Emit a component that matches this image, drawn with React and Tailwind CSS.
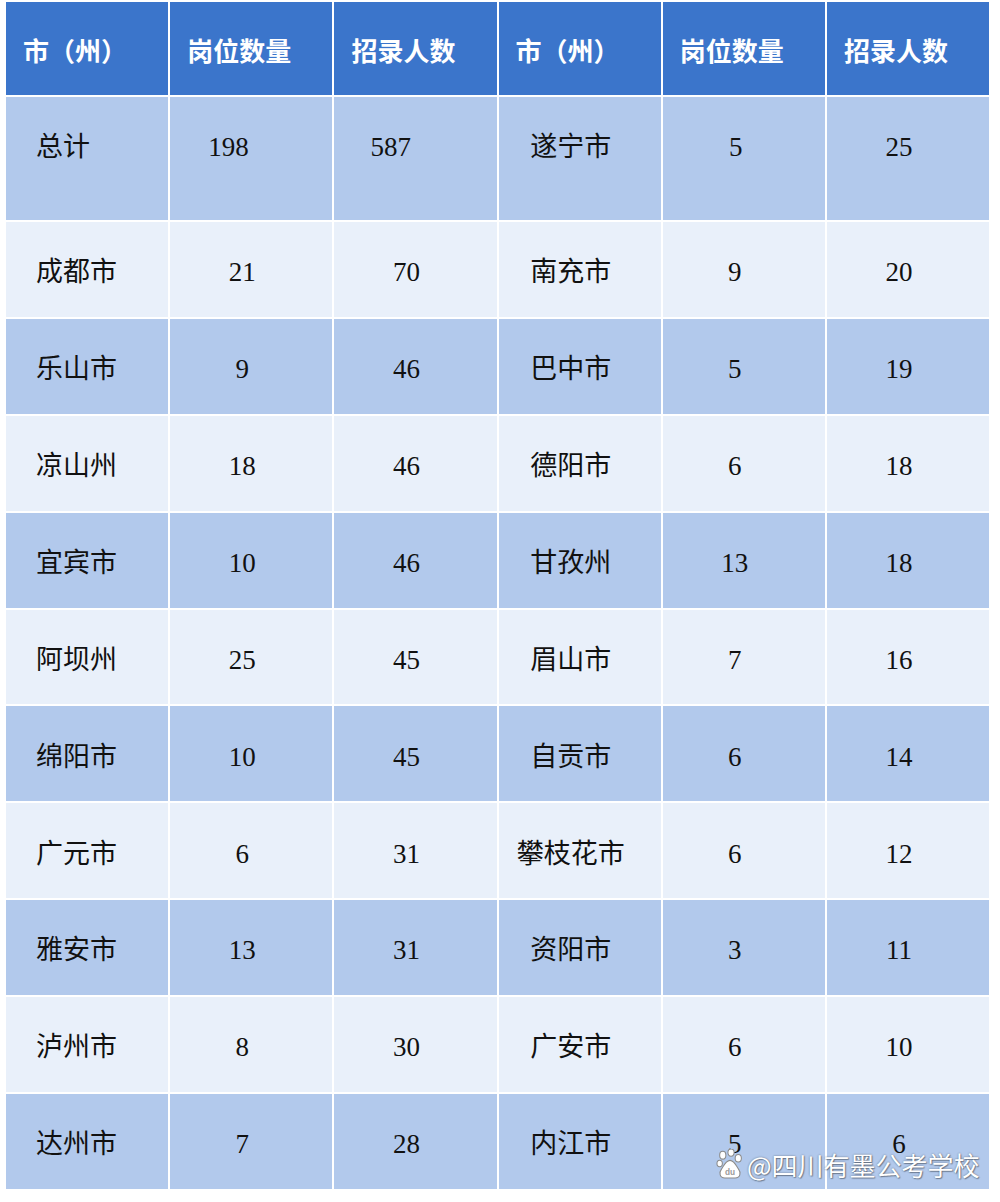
const header = ["市（州）", "岗位数量", "招录人数", "市（州）", "岗位数量", "招录人数"];

const rows = [
  ["成都市", "21", "70", "南充市", "9", "20"],
  ["乐山市", "9", "46", "巴中市", "5", "19"],
  ["凉山州", "18", "46", "德阳市", "6", "18"],
  ["宜宾市", "10", "46", "甘孜州", "13", "18"],
  ["阿坝州", "25", "45", "眉山市", "7", "16"],
  ["绵阳市", "10", "45", "自贡市", "6", "14"],
  ["广元市", "6", "31", "攀枝花市", "6", "12"],
  ["雅安市", "13", "31", "资阳市", "3", "11"],
  ["泸州市", "8", "30", "广安市", "6", "10"],
  ["达州市", "7", "28", "内江市", "5", "6"],
];

const bodyCls = "text-[27px] text-[#111] font-['Liberation_Serif','Noto_Sans_CJK_SC',serif]";
const topCell = "h-[123px] bg-[#b2c9ec] flex items-center pb-[22px] " + bodyCls;

function Paw() {
  return (
    <svg width="28" height="31" viewBox="0 0 26 30">
      <g fill="#fff" stroke="#8a8a8a" strokeWidth="1">
        <ellipse cx="6" cy="6" rx="3" ry="3.8" />
        <ellipse cx="14" cy="3.5" rx="3" ry="3.5" />
        <ellipse cx="21" cy="9" rx="3" ry="3.6" />
        <ellipse cx="3" cy="14" rx="2.6" ry="3.2" />
        <path d="M13 11 C9 11 7 16 5 19 C2 23 3 28 8 28 L18 28 C23 28 24 23 21 19 C19 16 17 11 13 11 Z" />
      </g>
      <text x="13" y="25" textAnchor="middle" fontSize="8" fontWeight="700" fill="#9a9a9a" fontFamily="Liberation Sans, sans-serif">du</text>
    </svg>
  );
}

export default function App() {
  return (
    <div className="relative w-[1000px] h-[1202px] bg-white pl-[6px] pt-[2px]">
      <div className="grid grid-cols-[repeat(6,162.2px)] gap-[2px]">
        {header.map((h, i) => (
          <div
            key={"h" + i}
            className="h-[93px] bg-[#3b75cb] flex items-center pl-[17px] pt-[2px] text-white text-[26px] font-bold font-['Noto_Sans_CJK_SC','Noto_Sans',sans-serif]"
          >
            {h}
          </div>
        ))}

        <div className={topCell + " pl-[30px]"}>总计</div>
        <div className={topCell + " pl-[38px]"}>198</div>
        <div className={topCell + " pl-[36px]"}>587</div>
        <div className={topCell + " justify-center pr-[18px]"}>遂宁市</div>
        <div className={topCell + " justify-center pr-[16px]"}>5</div>
        <div className={topCell + " justify-center pr-[18px]"}>25</div>

        {rows.map((r, ri) =>
          r.map((c, ci) => (
            <div
              key={ri + "-" + ci}
              className={
                "h-[94.9px] flex items-center pt-[6px] " +
                bodyCls +
                " " +
                (ri % 2 === 0 ? "bg-[#e9f0fa] " : "bg-[#b2c9ec] ") +
                (ci === 0 ? "pl-[30px]" : "justify-center pr-[18px]")
              }
            >
              {c}
            </div>
          ))
        )}
      </div>

      <div className="absolute left-[716px] top-[1149px] flex items-center gap-[3px]">
        <Paw />
        <span className="text-[26px] leading-none text-white font-['Noto_Sans_CJK_SC','Noto_Sans',sans-serif] [text-shadow:0_0_2px_rgba(0,0,0,0.45),1px_1px_1px_rgba(0,0,0,0.3)]">
          @四川有墨公考学校
        </span>
      </div>
    </div>
  );
}
